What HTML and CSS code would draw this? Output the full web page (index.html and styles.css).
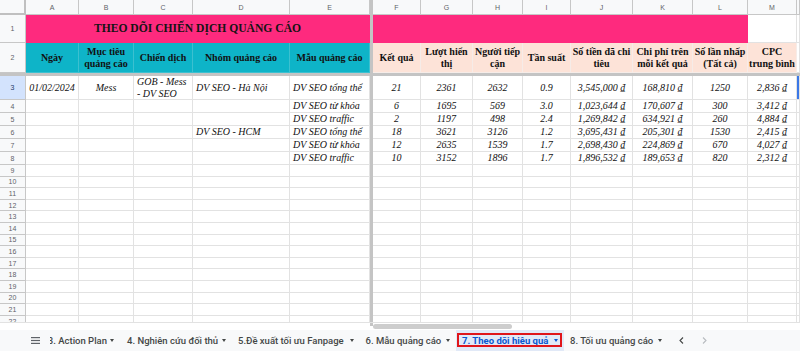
FILE: index.html
```
<!DOCTYPE html>
<html lang="vi">
<head>
<meta charset="utf-8">
<title>Theo dõi hiệu quả</title>
<link rel="stylesheet" href="styles.css">
</head>
<body>
<div class="sheet">
  <div class="row hdr">
    <div class="corner"></div><div>A</div><div>B</div><div>C</div><div>D</div><div>E</div><div class="fz"></div><div>F</div><div>G</div><div>H</div><div>I</div><div>J</div><div>K</div><div>L</div><div>M</div><div></div>
  </div>
  <div class="row r1">
    <div class="rn">1</div>
    <div class="title">THEO DÕI CHIẾN DỊCH QUẢNG CÁO</div>
    <div class="fz"></div>
    <div class="pink"></div>
    <div></div><div></div>
  </div>
  <div class="row r2">
    <div class="rn">2</div>
    <div class="th teal">Ngày</div>
    <div class="th teal">Mục tiêu<br>quảng cáo</div>
    <div class="th teal">Chiến dịch</div>
    <div class="th teal">Nhóm quảng cáo</div>
    <div class="th teal">Mẫu quảng cáo</div>
    <div class="fz"></div>
    <div class="th peach">Kết quả</div>
    <div class="th peach">Lượt hiển<br>thị</div>
    <div class="th peach">Người tiếp<br>cận</div>
    <div class="th peach">Tần suất</div>
    <div class="th peach">Số tiền đã chi<br>tiêu</div>
    <div class="th peach">Chi phí trên<br>mỗi kết quả</div>
    <div class="th peach">Số lần nhấp<br>(Tất cả)</div>
    <div class="th peach">CPC<br>trung bình</div>
    <div></div>
  </div>
  <div class="fzrow"></div>
  <div class="row r3">
    <div class="rn on">3</div>
    <div>01/02/2024</div><div>Mess</div><div class="l">GOB - Mess<br>- DV SEO</div><div class="l">DV SEO - Hà Nội</div><div class="l">DV SEO tổng thể</div>
    <div class="fz"></div>
    <div>21</div><div>2361</div><div>2632</div><div>0.9</div><div>3,545,000 ₫</div><div>168,810 ₫</div><div>1250</div><div>2,836 ₫</div><div class="sel"></div>
  </div>
  <div class="row rm">
    <div class="rn">4</div>
    <div></div><div></div><div></div><div></div><div class="l">DV SEO từ khóa</div>
    <div class="fz"></div>
    <div>6</div><div>1695</div><div>569</div><div>3.0</div><div>1,023,644 ₫</div><div>170,607 ₫</div><div>300</div><div>3,412 ₫</div><div></div>
  </div>
  <div class="row rm">
    <div class="rn">5</div>
    <div></div><div></div><div></div><div></div><div class="l">DV SEO traffic</div>
    <div class="fz"></div>
    <div>2</div><div>1197</div><div>498</div><div>2.4</div><div>1,269,842 ₫</div><div>634,921 ₫</div><div>260</div><div>4,884 ₫</div><div></div>
  </div>
  <div class="row rm">
    <div class="rn">6</div>
    <div></div><div></div><div></div><div class="l">DV SEO - HCM</div><div class="l">DV SEO tổng thể</div>
    <div class="fz"></div>
    <div>18</div><div>3621</div><div>3126</div><div>1.2</div><div>3,695,431 ₫</div><div>205,301 ₫</div><div>1530</div><div>2,415 ₫</div><div></div>
  </div>
  <div class="row rm">
    <div class="rn">7</div>
    <div></div><div></div><div></div><div></div><div class="l">DV SEO từ khóa</div>
    <div class="fz"></div>
    <div>12</div><div>2635</div><div>1539</div><div>1.7</div><div>2,698,430 ₫</div><div>224,869 ₫</div><div>670</div><div>4,027 ₫</div><div></div>
  </div>
  <div class="row rm">
    <div class="rn">8</div>
    <div></div><div></div><div></div><div></div><div class="l">DV SEO traffic</div>
    <div class="fz"></div>
    <div>10</div><div>3152</div><div>1896</div><div>1.7</div><div>1,896,532 ₫</div><div>189,653 ₫</div><div>820</div><div>2,312 ₫</div><div></div>
  </div>
  <div class="row rs"><div class="rn">9</div><div></div><div></div><div></div><div></div><div></div><div class="fz"></div><div></div><div></div><div></div><div></div><div></div><div></div><div></div><div></div><div></div></div>
  <div class="row rs"><div class="rn">10</div><div></div><div></div><div></div><div></div><div></div><div class="fz"></div><div></div><div></div><div></div><div></div><div></div><div></div><div></div><div></div><div></div></div>
  <div class="row rs"><div class="rn">11</div><div></div><div></div><div></div><div></div><div></div><div class="fz"></div><div></div><div></div><div></div><div></div><div></div><div></div><div></div><div></div><div></div></div>
  <div class="row rs"><div class="rn">12</div><div></div><div></div><div></div><div></div><div></div><div class="fz"></div><div></div><div></div><div></div><div></div><div></div><div></div><div></div><div></div><div></div></div>
  <div class="row rs"><div class="rn">13</div><div></div><div></div><div></div><div></div><div></div><div class="fz"></div><div></div><div></div><div></div><div></div><div></div><div></div><div></div><div></div><div></div></div>
  <div class="row rs"><div class="rn">14</div><div></div><div></div><div></div><div></div><div></div><div class="fz"></div><div></div><div></div><div></div><div></div><div></div><div></div><div></div><div></div><div></div></div>
  <div class="row rs"><div class="rn">15</div><div></div><div></div><div></div><div></div><div></div><div class="fz"></div><div></div><div></div><div></div><div></div><div></div><div></div><div></div><div></div><div></div></div>
  <div class="row rs"><div class="rn">16</div><div></div><div></div><div></div><div></div><div></div><div class="fz"></div><div></div><div></div><div></div><div></div><div></div><div></div><div></div><div></div><div></div></div>
  <div class="row rs"><div class="rn">17</div><div></div><div></div><div></div><div></div><div></div><div class="fz"></div><div></div><div></div><div></div><div></div><div></div><div></div><div></div><div></div><div></div></div>
  <div class="row rs"><div class="rn">18</div><div></div><div></div><div></div><div></div><div></div><div class="fz"></div><div></div><div></div><div></div><div></div><div></div><div></div><div></div><div></div><div></div></div>
  <div class="row rs"><div class="rn">19</div><div></div><div></div><div></div><div></div><div></div><div class="fz"></div><div></div><div></div><div></div><div></div><div></div><div></div><div></div><div></div><div></div></div>
  <div class="row rs"><div class="rn">20</div><div></div><div></div><div></div><div></div><div></div><div class="fz"></div><div></div><div></div><div></div><div></div><div></div><div></div><div></div><div></div><div></div></div>
  <div class="row rs"><div class="rn">21</div><div></div><div></div><div></div><div></div><div></div><div class="fz"></div><div></div><div></div><div></div><div></div><div></div><div></div><div></div><div></div><div></div></div>
  <div class="row rs"><div class="rn">22</div><div></div><div></div><div></div><div></div><div></div><div class="fz"></div><div></div><div></div><div></div><div></div><div></div><div></div><div></div><div></div><div></div></div>
</div>
<div class="hscroll">
  <div class="hs-left"></div>
  <div class="hs-fz"></div>
  <div class="hs-track"><div class="thumb"></div></div>
</div>
<div class="tabbar">
  <svg class="menu" width="9" height="7" viewBox="0 0 9 7"><rect x="0" y="0" width="9" height="1.2" fill="#5f6368"/><rect x="0" y="2.9" width="9" height="1.2" fill="#5f6368"/><rect x="0" y="5.8" width="9" height="1.2" fill="#5f6368"/></svg>
  <div class="tabs">
    <div class="tab t1"><span>3. Action Plan</span><i class="caret"></i></div>
    <div class="tab t2"><span>4. Nghiên cứu đối thủ</span><i class="caret"></i></div>
    <div class="tab t3"><span>5.Đề xuất tối ưu Fanpage</span><i class="caret"></i></div>
    <div class="tab t4"><span>6. Mẫu quảng cáo</span><i class="caret"></i></div>
    <div class="tab t5 on"><span>7. Theo dõi hiệu quả</span><i class="caret"></i></div>
    <div class="tab t6"><span>8. Tối ưu quảng cáo</span><i class="caret"></i></div>
    <div class="nav">
      <svg width="5" height="7" viewBox="0 0 5 7"><path d="M4 0.5 L1 3.5 L4 6.5" fill="none" stroke="#444746" stroke-width="1.1"/></svg>
      <svg width="5" height="7" viewBox="0 0 5 7"><path d="M1 0.5 L4 3.5 L1 6.5" fill="none" stroke="#b8bcc0" stroke-width="1.1"/></svg>
    </div>
  </div>
</div>
</body>
</html>
```
FILE: styles.css
```
* { box-sizing: border-box; }
html, body { margin: 0; padding: 0; }
body {
  width: 800px;
  height: 351px;
  overflow: hidden;
  background: #fff;
  display: flex;
  flex-direction: column;
  font-family: "Liberation Serif", "Times New Roman", serif;
  color: #111;
}
.sheet { height: 322px; flex: none; overflow: hidden; }
.row {
  display: grid;
  grid-template-columns: 26px 53px 55px 59px 97px 80px 3px 48px 52px 50px 48px 62px 60px 55px 49px 1fr;
}
.row > div {
  border-right: 1px solid #e2e2e2;
  border-bottom: 1px solid #e2e2e2;
  display: flex;
  align-items: center;
  justify-content: center;
  text-align: center;
  overflow: hidden;
  white-space: nowrap;
  font-size: 10px;
  font-style: italic;
  line-height: 11.5px;
}
.row > .l { justify-content: flex-start; text-align: left; padding-left: 3px; }
.hdr { height: 15px; }
.r1 { height: 28px; }
.r2 { height: 30px; }
.r3 { height: 24px; }
.rm { height: 13px; }
.rs { height: 11.6px; }
.hdr > div {
  background: #f8f9fa;
  border-color: #c7c7c7;
  font: 7px "Liberation Sans", Arial, sans-serif;
  color: #5f6368;
}
.hdr > .corner { border-right: 2px solid #c0c0c0; border-bottom: 2px solid #c0c0c0; }
.row > .rn {
  background: #f8f9fa;
  border-color: #c7c7c7;
  font: 7px "Liberation Sans", Arial, sans-serif;
  color: #5f6368;
}
.row > .rn.on { background: #d3e3fd; color: #1f3b66; }
.row > .fz { background: #c4c4c4; border: none; }
.fzrow { height: 3px; background: #c4c4c4; }
.row > .title {
  grid-column: span 5;
  background: #fe2a7e;
  border-color: #fe2a7e;
  font-size: 11.6px;
  font-weight: bold;
  font-style: normal;
  color: #141414;
}
.row > .pink { grid-column: span 7; background: #fe2a7e; border-color: #fe2a7e; }
.row > .th {
  font-weight: bold;
  font-style: normal;
  line-height: 12px;
  color: #111;
}
.row > .teal { background: #0eb4c8; border-color: #3cc0d0; }
.row > .peach { background: #fde3d8; border-color: #f6ece8; }
.row > .sel { box-shadow: inset 2px 0 0 #3b78e7; }

.hscroll { height: 8px; flex: none; display: flex; background: #fff; border-top: 1px solid #e2e2e2; }
.hs-left { width: 370px; border-left: 26px solid #fff; }
.hs-fz { width: 3px; height: 3px; background: #c4c4c4; }
.hs-track { flex: 1; padding-top: 1px; }
.thumb { width: 139px; height: 5px; border-radius: 3px; background: #cdcdcd; }

.tabbar {
  height: 21px;
  flex: none;
  display: flex;
  align-items: center;
  background: #f8f9fa;
  font-family: Roboto, "Noto Sans", sans-serif;
  font-size: 9.5px;
  font-weight: 500;
  color: #444746;
}
.menu { margin-left: 31px; flex: none; }
.tabs {
  margin-left: 10px;
  height: 100%;
  display: flex;
  align-items: stretch;
  overflow: hidden;
  flex: 1;
}
.tab {
  display: flex;
  align-items: center;
  padding: 0 6px;
  white-space: nowrap;
  flex: none;
  position: relative;
}
.t1 { margin-left: -8.2px; width: 78.2px; }
.t2 { width: 112px; padding-left: 7px; }
.t3 { width: 127.5px; }
.t4 { width: 96.5px; }
.t5 { width: 108px; }
.t6 { width: 104px; }
.caret {
  display: block;
  width: 0;
  height: 0;
  margin-left: auto;
  border-left: 2.5px solid transparent;
  border-right: 2.5px solid transparent;
  border-top: 3px solid #444746;
}
.tab.on { background: #e1e9f7; color: #0b57d0; font-weight: 700; }
.tab.on .caret { border-top-color: #0b57d0; }
.tab.on::after {
  content: "";
  position: absolute;
  left: 1px;
  right: 2px;
  top: 3px;
  bottom: 4px;
  border: 2px solid #e0161b;
}
.nav { display: flex; align-items: center; gap: 18px; margin-left: 11px; }
```
